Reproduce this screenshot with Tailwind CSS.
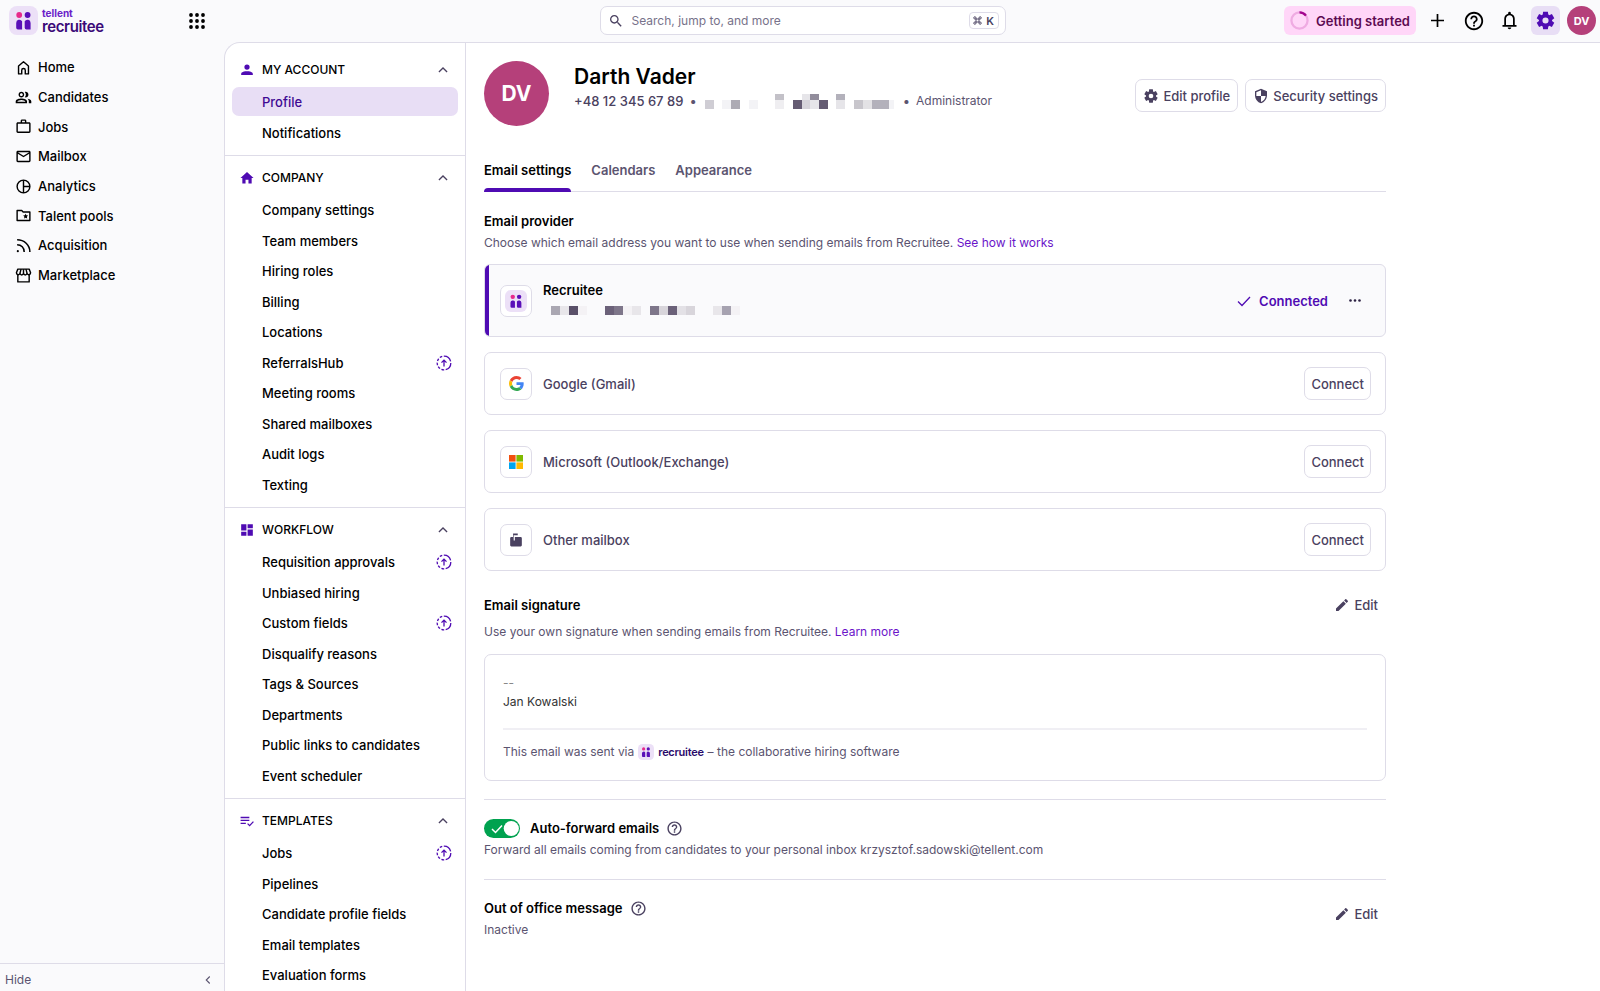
<!DOCTYPE html>
<html lang="en">
<head>
  <meta charset="UTF-8">
  <meta name="viewport" content="width=device-width, initial-scale=1.0">
  <title>Recruitee - Profile settings</title>
  <script src="https://cdn.jsdelivr.net/npm/@tailwindcss/browser@4"></script>
</head>
<body class="bg-[#fafafc] text-black font-['Inter',sans-serif] text-[13px] leading-[20px] h-screen flex flex-col overflow-hidden">

  <!-- Icon sprite -->
  <svg class="hidden" xmlns="http://www.w3.org/2000/svg">
    <symbol id="logo" viewBox="0 0 29 29">
      <rect width="29" height="29" rx="8" fill="#ece0f7"/>
      <circle cx="10.2" cy="9" r="2.9" fill="#e72a8b"/>
      <circle cx="18.6" cy="9" r="2.9" fill="#5a0fb8"/>
      <path d="M7.2 23.5v-6.6a3.2 3.2 0 0 1 5.9-1.7v8.3H9a1.8 1.8 0 0 1-1.8-1.8zM21.6 23.5v-6.6a3.2 3.2 0 0 0-5.9-1.7v6.5a1.8 1.8 0 0 0 1.8 1.8z" fill="#5a0fb8"/>
    </symbol>
    <symbol id="home" viewBox="0 0 24 24"><path d="M5 10l7-6 7 6v11h-4.5v-5a2.5 2.5 0 0 0-5 0v5H5z" fill="none" stroke="currentColor" stroke-width="2" stroke-linejoin="round"/></symbol>
    <symbol id="group" viewBox="0 0 24 24"><path fill="currentColor" d="M9 13.25c-3 0-8 1.2-8 4V20h16v-2.75c0-2.8-5-4-8-4zM3.3 18c.2-1.5 3.3-2.6 5.7-2.6s5.5 1.1 5.7 2.6H3.3zM9 12c2.2 0 4-1.8 4-4s-1.800-4-4-4-4 1.800-4 4 1.800 4 4 4zm0-6c1.100 0 2 .9 2 2s-.9 2-2 2-2-.9-2-2 .9-2 2-2zm8.500 7.800c1.200.9 2 2 2 3.450V20H23v-2.750c0-2-3-3.150-5.500-3.450zM15 12c2.200 0 4-1.800 4-4s-1.800-4-4-4c-.4 0-.9.1-1.200.2a6 6 0 0 1 0 7.600c.4.1.8.2 1.200.2z"/></symbol>
    <symbol id="work" viewBox="0 0 24 24"><path fill="currentColor" d="M14 6V4h-4v2h4zM4 8v11h16V8H4zm16-2c1.110 0 2 .89 2 2v11c0 1.110-.89 2-2 2H4c-1.110 0-2-.89-2-2l.01-11c0-1.110.88-2 1.990-2h4V4c0-1.110.89-2 2-2h4c1.110 0 2 .89 2 2v2h4z"/></symbol>
    <symbol id="mail" viewBox="0 0 24 24"><path fill="currentColor" d="M22 6c0-1.100-.9-2-2-2H4c-1.100 0-2 .9-2 2v12c0 1.100.9 2 2 2h16c1.100 0 2-.9 2-2V6zm-2 0l-8 5-8-5h16zm0 12H4V8l8 5 8-5v10z"/></symbol>
    <symbol id="pie" viewBox="0 0 24 24"><g fill="none" stroke="currentColor" stroke-width="2"><circle cx="12" cy="12" r="9"/><path d="M12 3v18M12 12h9"/></g></symbol>
    <symbol id="folder" viewBox="0 0 24 24"><path d="M3 5h6.500l2 2H21v12H3z" fill="none" stroke="currentColor" stroke-width="2" stroke-linejoin="round"/><path fill="currentColor" d="M15 9.500l1.100 2.300 2.400.3-1.800 1.700.5 2.500-2.200-1.200-2.200 1.200.5-2.500-1.800-1.700 2.400-.3z"/></symbol>
    <symbol id="rss" viewBox="0 0 24 24"><g fill="none" stroke="currentColor" stroke-width="2.200"><path d="M3 4c10 0 18 7 18 17"/><path d="M3 11c6 0 10 4 10 10"/></g><circle cx="4" cy="20" r="1.500" fill="currentColor"/></symbol>
    <symbol id="store" viewBox="0 0 24 24"><g fill="none" stroke="currentColor" stroke-width="2" stroke-linejoin="round"><path d="M4 3h16l2 5c0 3-4 4-5 1-1 3-4 3-5 0-1 3-4 3-5 0-1 3-5 2-5-1z"/><path d="M4 11v10h16V11M8.500 3L7 9M15.500 3L17 9M12 3v6"/></g></symbol>
    <symbol id="search" viewBox="0 0 24 24"><path fill="currentColor" d="M15.500 14h-.79l-.28-.27C15.410 12.590 16 11.110 16 9.500 16 5.910 13.090 3 9.500 3S3 5.910 3 9.500 5.910 16 9.500 16c1.610 0 3.090-.59 4.230-1.570l.27.28v.79l5 4.990L20.490 19l-4.990-5zm-6 0C7.010 14 5 11.990 5 9.500S7.010 5 9.500 5 14 7.010 14 9.500 11.990 14 9.500 14z"/></symbol>
    <symbol id="help" viewBox="0 0 24 24"><path fill="currentColor" d="M11 18h2v-2h-2v2zm1-16C6.480 2 2 6.480 2 12s4.480 10 10 10 10-4.480 10-10S17.520 2 12 2zm0 18c-4.410 0-8-3.590-8-8s3.590-8 8-8 8 3.590 8 8-3.590 8-8 8zm0-14c-2.210 0-4 1.790-4 4h2c0-1.100.9-2 2-2s2 .9 2 2c0 2-3 1.750-3 5h2c0-2.250 3-2.500 3-5 0-2.210-1.790-4-4-4z"/></symbol>
    <symbol id="bell" viewBox="0 0 24 24"><path fill="currentColor" d="M4 19v-2h2v-7c0-2.800 1.700-5.200 4.500-5.800V3.500a1.500 1.500 0 0 1 3 0v.7C16.300 4.800 18 7.200 18 10v7h2v2H4zm4-2h8v-7c0-2.200-1.800-4-4-4s-4 1.800-4 4v7zm4 5c-1.100 0-2-.9-2-2h4c0 1.100-.9 2-2 2z"/></symbol>
    <symbol id="gear" viewBox="0 0 24 24"><path fill="currentColor" fill-rule="evenodd" d="M9.250 22l-.4-3.200q-.33-.12-.61-.3-.29-.17-.56-.37L4.700 19.370l-2.750-4.750 2.570-1.950q-.02-.17-.02-.34v-.68q0-.16.02-.33L1.950 9.370 4.700 4.620l2.980 1.250q.27-.2.57-.37.3-.18.6-.3L9.250 2h5.500l.4 3.200q.32.12.61.3.29.17.56.37l2.980-1.250 2.750 4.750-2.570 1.950q.02.17.02.33v.68q0 .17-.05.34l2.580 1.950-2.750 4.750-2.960-1.240q-.27.2-.57.37-.3.18-.6.3l-.4 3.200zM12 15.500a3.500 3.500 0 1 0 0-7 3.500 3.500 0 0 0 0 7z"/></symbol>
    <symbol id="shield" viewBox="0 0 24 24"><path fill="currentColor" d="M12 1L3 5v6c0 5.550 3.840 10.740 9 12 5.160-1.260 9-6.450 9-12V5l-9-4zm0 10.990h7c-.53 4.120-3.280 7.790-7 8.940V12H5V6.300l7-3.110v8.800z"/></symbol>
    <symbol id="pencil" viewBox="0 0 24 24"><path fill="currentColor" d="M3 17.250V21h3.750L17.810 9.940l-3.750-3.750L3 17.250zM20.710 7.040c.39-.39.39-1.020 0-1.410l-2.340-2.340c-.39-.39-1.020-.39-1.410 0l-1.830 1.830 3.750 3.750 1.830-1.830z"/></symbol>
    <symbol id="person" viewBox="0 0 24 24"><path fill="currentColor" d="M12 11.500a4.500 4.500 0 1 0 0-9 4.500 4.500 0 0 0 0 9zM2 20.500v-2c0-3.500 6-4.500 10-4.500s10 1 10 4.500v2z"/></symbol>
    <symbol id="house" viewBox="0 0 24 24"><path fill="currentColor" d="M12 1.500L.8 12H4v9.500h5.500V15h5v6.500H20V12h3.200z"/></symbol>
    <symbol id="board" viewBox="0 0 24 24"><path fill="currentColor" d="M2 2h9v11H2zM2 15h9v7H2zM13 2h9v7h-9zM13 11h9v11h-9z"/></symbol>
    <symbol id="checklist" viewBox="0 0 24 24"><path d="M1 6h15M1 11h15M1 16h9M13 16.500l3.500 3.500L23 13" fill="none" stroke="currentColor" stroke-width="2.200"/></symbol>
    <symbol id="up" viewBox="0 0 24 24"><path d="M5 15.500l7-7 7 7" fill="none" stroke="currentColor" stroke-width="2.200"/></symbol>
    <symbol id="upgrade" viewBox="0 0 16 16"><g fill="none" stroke="currentColor" stroke-width="1.300"><path d="M8 1.200a6.800 6.800 0 0 1 0 13.600" stroke-dasharray="9 1.500"/><path d="M8 14.800A6.800 6.800 0 0 1 8 1.200" stroke-dasharray="2.600 1.600"/><path d="M8 11.500v-6M5.500 7.600L8 5.100l2.500 2.500"/></g></symbol>
    <symbol id="mailbox" viewBox="0 0 24 24"><path fill="currentColor" d="M20 7H10v6H8V4h7V1H7v6H4a2 2 0 0 0-2 2v12a2 2 0 0 0 2 2h16a2 2 0 0 0 2-2V9a2 2 0 0 0-2-2z"/></symbol>
  </svg>

  <!-- Top bar -->
  <header class="h-[42px] shrink-0 flex items-start justify-between pt-[6px] px-1">
    <div class="flex flex-1 items-center pl-[5px]">
      <a href="#" class="flex items-center gap-1">
        <svg class="size-[29px]"><use href="#logo"/></svg>
        <span class="flex flex-col w-[62px] text-[#3a0a78] font-semibold">
          <span class="text-[10px] leading-[12px] font-bold text-[#6a1fc9]">tellent</span>
          <span class="text-[15px] leading-[15px] tracking-tight">recruitee</span>
        </span>
      </a>
      <button class="ml-[85px]" aria-label="Apps">
        <svg class="size-4" viewBox="0 0 16 16"><path d="M2 2h0M8 2h0M14 2h0M2 8h0M8 8h0M14 8h0M2 14h0M8 14h0M14 14h0" stroke="currentColor" stroke-width="3.800" stroke-linecap="round"/></svg>
      </button>
    </div>

    <label class="flex h-[29px] w-[406px] items-center rounded-[7px] border border-[#dedce8] bg-white pl-[7px] pr-[6px]">
      <svg class="size-4 text-[#4a4160]"><use href="#search"/></svg>
      <input type="search" aria-label="Search" placeholder="Search, jump to, and more" class="ml-2 min-w-0 flex-1 text-xs outline-none placeholder:text-[#77728a]">
      <kbd class="flex h-[17px] w-[30px] items-center justify-center gap-1 rounded border border-[#dedce8] font-['Inter',sans-serif] text-[11px] font-semibold text-[#4a4160]">
        <svg class="size-[9px]" viewBox="0 0 24 24" fill="none" stroke="currentColor" stroke-width="2.500"><path d="M8 8h8v8H8zM8 8H5a3 3 0 1 1 3-3zM16 8V5a3 3 0 1 1 3 3zM16 16h3a3 3 0 1 1-3 3zM8 16v3a3 3 0 1 1-3-3z"/></svg>
        K
      </kbd>
    </label>

    <div class="flex flex-1 items-center justify-end gap-[7px]">
      <button class="flex h-[29px] items-center gap-[7px] rounded-md bg-[#ffd6f8] px-[6px] font-semibold text-[#5c0b52] whitespace-nowrap">
        <svg class="size-[19px]" viewBox="0 0 20 20" fill="none" stroke-width="2.400"><circle cx="10" cy="10" r="8.500" stroke="#efabe2"/><path d="M10 1.500a8.500 8.500 0 0 1 6.800 3.400" stroke="#a3058e"/></svg>
        Getting started
      </button>
      <button class="flex size-[29px] items-center justify-center" aria-label="Add">
        <svg class="size-[13px]" viewBox="0 0 13 13"><path d="M6.500 0v13M0 6.500h13" stroke="currentColor" stroke-width="1.700"/></svg>
      </button>
      <button class="flex size-[29px] items-center justify-center" aria-label="Help"><svg class="size-[22px]"><use href="#help"/></svg></button>
      <button class="flex size-[29px] items-center justify-center" aria-label="Notifications"><svg class="size-[21px]"><use href="#bell"/></svg></button>
      <button class="flex size-[29px] items-center justify-center rounded-md bg-[#e8def5] text-[#4f0bb3]" aria-label="Settings"><svg class="size-[21px]"><use href="#gear"/></svg></button>
      <button class="flex size-[29px] items-center justify-center rounded-full bg-[#b5407a] text-[11px] font-bold text-white">DV</button>
    </div>
  </header>

  <div class="flex min-h-0 flex-1">
    <!-- Main navigation -->
    <aside class="flex w-[224px] shrink-0 flex-col justify-between">
      <nav class="flex flex-col pt-[10px] font-medium [&_a]:flex [&_a]:h-[30px] [&_a:nth-child(3n)]:h-[29px] [&_a]:items-center [&_a]:gap-[6px] [&_a]:pl-[15px] [&_svg]:size-[17px]">
        <a href="#"><svg><use href="#home"/></svg>Home</a>
        <a href="#"><svg><use href="#group"/></svg>Candidates</a>
        <a href="#"><svg><use href="#work"/></svg>Jobs</a>
        <a href="#"><svg><use href="#mail"/></svg>Mailbox</a>
        <a href="#"><svg><use href="#pie"/></svg>Analytics</a>
        <a href="#"><svg><use href="#folder"/></svg>Talent pools</a>
        <a href="#"><svg><use href="#rss"/></svg>Acquisition</a>
        <a href="#"><svg><use href="#store"/></svg>Marketplace</a>
      </nav>
      <button class="flex h-7 items-center justify-between border-t border-[#dedce8] pt-1 pl-[5px] pr-[10px] text-xs text-[#5b5470]">
        Hide
        <svg class="size-3 -rotate-90"><use href="#up"/></svg>
      </button>
    </aside>

    <div class="flex min-w-0 flex-1 overflow-hidden rounded-tl-2xl border-t border-l border-[#dedce8] bg-white">
      <!-- Settings menu -->
      <nav id="settingsMenu" class="w-[241px] shrink-0 overflow-hidden border-r border-[#dedce8] pt-[5px] font-medium"></nav>

      <main class="min-w-0 flex-1 overflow-hidden px-[18px] pt-[18px]">
        <div class="max-w-[902px]">
          <div class="flex items-start">
            <div class="flex size-[65px] shrink-0 items-center justify-center rounded-full bg-[#b5407a] text-[21px] font-bold text-white">DV</div>
            <div class="ml-[25px] flex-1">
              <h1 class="pt-[2px] text-[21px] leading-7 font-semibold">Darth Vader</h1>
              <p class="flex items-center text-[#5b5470]">
                <span class="font-medium text-[#4a4160]">+48 12 345 67 89</span>
                <span class="mx-[6px]">•</span>
                <svg class="mt-[2px] mr-[6px] ml-[2px] h-4 w-[192px]" viewBox="0 0 192 16" shape-rendering="crispEdges">
                  <path fill="#cfcdd4" d="M0 6h9v9H0z"/><path fill="#f3f3f6" d="M17 6h9v9h-9zM44 6h9v9h-9zM184 6h5v9h-5z"/><path fill="#adabb4" d="M26 6h9v9h-9z"/>
                  <path fill="#c3c1c8" d="M70 0h9v6h-9z"/><path fill="#efeef1" d="M70 6h9v9h-9z"/>
                  <path fill="#655c73" d="M88 6h9v9h-9zM114 6h9v9h-9z"/><path fill="#d6d4da" d="M97 6h8v9h-8z"/><path fill="#e6e5e9" d="M97 0h8v6h-8zM105 6h9v9h-9zM131 6h9v9h-9z"/>
                  <path fill="#928d9c" d="M105 0h9v6h-9z"/><path fill="#b3b1bb" d="M131 0h9v6h-9zM167 6h17v9h-17z"/><path fill="#c8c6cc" d="M149 6h9v9h-9z"/><path fill="#e3e2e5" d="M158 6h9v9h-9z"/>
                </svg>
                <span class="mr-[6px]">•</span>
                <span class="text-xs leading-5">Administrator</span>
              </p>
            </div>
            <div class="flex gap-[7px] pt-[18px] font-medium text-[#4a4160]">
              <button class="flex h-[33px] items-center gap-1 rounded-[7px] border border-[#dedce8] px-[7px]"><svg class="size-4"><use href="#gear"/></svg>Edit profile</button>
              <button class="flex h-[33px] items-center gap-1 rounded-[7px] border border-[#dedce8] px-[7px]"><svg class="size-4"><use href="#shield"/></svg>Security settings</button>
            </div>
          </div>

          <!-- Tabs -->
          <div class="mt-[34px] flex h-8 gap-5 border-b border-[#dedce8] font-semibold text-[#5b5470]">
            <button class="-mb-px flex flex-col justify-between text-black">Email settings<span class="h-1 w-full rounded-t bg-[#4f0bb3]"></span></button>
            <button class="self-start">Calendars</button>
            <button class="self-start">Appearance</button>
          </div>

          <!-- Email provider -->
          <section class="mt-[19px]">
            <h2 class="font-semibold">Email provider</h2>
            <p class="mt-[2px] text-xs leading-5 text-[#5b5470]">Choose which email address you want to use when sending emails from Recruitee. <a href="#" class="text-[#6a14c9]">See how it works</a></p>

            <div class="mt-[11px] flex flex-col gap-[15px] font-medium text-[#4a4160]">
              <div class="flex h-[73px] items-center overflow-hidden rounded-md border border-[#dedce8] bg-[#fafafc] pr-[18px]">
                <span class="h-full w-1 bg-[#4f0bb3]"></span>
                <span class="ml-[11px] flex size-8 items-center justify-center rounded-[7px] border border-[#dedce8] bg-white"><svg class="size-[22px]"><use href="#logo"/></svg></span>
                <div class="ml-[11px] flex-1">
                  <h3 class="font-semibold text-black">Recruitee</h3>
                  <svg class="my-[6px] h-[10px] w-[200px]" viewBox="0 0 200 10" shape-rendering="crispEdges">
                    <path fill="#aaa7b2" d="M8 0h9v9H8z"/><path fill="#e8e6ea" d="M17 0h9v9h-9zM89 0h9v9h-9zM170 0h9v9h-9z"/><path fill="#5a5069" d="M26 0h9v9h-9z"/><path fill="#f4f2f5" d="M35 0h9v9h-9zM80 0h9v9h-9zM188 0h9v9h-9z"/>
                    <path fill="#6b6179" d="M62 0h9v9h-9zM125 0h9v9h-9z"/><path fill="#7e768a" d="M71 0h9v9h-9zM107 0h9v9h-9z"/><path fill="#d8d5db" d="M116 0h9v9h-9zM143 0h9v9h-9z"/><path fill="#e3e1e6" d="M134 0h9v9h-9z"/><path fill="#a6a2b0" d="M179 0h9v9h-9z"/>
                  </svg>
                </div>
                <span class="flex items-center gap-2 font-semibold text-[#4f0bb3]">
                  <svg class="size-[14px]" viewBox="0 0 14 14"><path d="M1 7.500l4 4 8-8.500" fill="none" stroke="currentColor" stroke-width="1.300"/></svg>
                  Connected
                </span>
                <button class="ml-[15px] flex size-6 items-center justify-center text-[#2c2142]" aria-label="More">
                  <svg class="h-[3px] w-3" viewBox="0 0 12 3" fill="currentColor"><circle cx="1.500" cy="1.500" r="1.300"/><circle cx="6" cy="1.500" r="1.300"/><circle cx="10.500" cy="1.500" r="1.300"/></svg>
                </button>
              </div>

              <div class="flex h-[63px] items-center rounded-[7px] border border-[#dedce8] pr-[14px] pl-[15px]">
                <span class="flex size-8 items-center justify-center rounded-[7px] border border-[#dedce8]">
                  <svg class="size-[15px]" viewBox="0 0 48 48"><path fill="#ea4335" d="M24 9.500c3.540 0 6.710 1.220 9.210 3.600l6.850-6.850C35.900 2.380 30.470 0 24 0 14.620 0 6.510 5.380 2.560 13.220l7.980 6.190C12.430 13.720 17.740 9.500 24 9.500z"/><path fill="#4285f4" d="M46.980 24.550c0-1.570-.15-3.090-.38-4.550H24v9.020h12.940c-.58 2.960-2.260 5.480-4.780 7.180l7.730 6c4.510-4.180 7.090-10.360 7.090-17.650z"/><path fill="#fbbc05" d="M10.530 28.590c-.48-1.450-.76-2.990-.76-4.590s.27-3.140.76-4.590l-7.980-6.190C.92 16.460 0 20.120 0 24c0 3.880.92 7.540 2.560 10.780l7.970-6.190z"/><path fill="#34a853" d="M24 48c6.480 0 11.930-2.130 15.890-5.810l-7.730-6c-2.150 1.450-4.920 2.300-8.160 2.300-6.260 0-11.570-4.220-13.470-9.910l-7.980 6.190C6.510 42.620 14.620 48 24 48z"/></svg>
                </span>
                <h3 class="ml-[11px] flex-1">Google (Gmail)</h3>
                <button class="h-[33px] rounded-[7px] border border-[#dedce8] px-[6px] font-medium">Connect</button>
              </div>

              <div class="flex h-[63px] items-center rounded-[7px] border border-[#dedce8] pr-[14px] pl-[15px]">
                <span class="flex size-8 items-center justify-center rounded-[7px] border border-[#dedce8]">
                  <svg class="size-[14px]" viewBox="0 0 14 14"><path fill="#f2500f" d="M0 0h6.600v6.600H0z"/><path fill="#7fba00" d="M7.400 0H14v6.600H7.400z"/><path fill="#00a4ef" d="M0 7.400h6.600V14H0z"/><path fill="#ffb900" d="M7.400 7.400H14V14H7.400z"/></svg>
                </span>
                <h3 class="ml-[11px] flex-1">Microsoft (Outlook/Exchange)</h3>
                <button class="h-[33px] rounded-[7px] border border-[#dedce8] px-[6px] font-medium">Connect</button>
              </div>

              <div class="flex h-[63px] items-center rounded-[7px] border border-[#dedce8] pr-[14px] pl-[15px]">
                <span class="flex size-8 items-center justify-center rounded-[7px] border border-[#dedce8]"><svg class="size-[14px]"><use href="#mailbox"/></svg></span>
                <h3 class="ml-[11px] flex-1">Other mailbox</h3>
                <button class="h-[33px] rounded-[7px] border border-[#dedce8] px-[6px] font-medium">Connect</button>
              </div>
            </div>
          </section>

          <!-- Email signature -->
          <section class="mt-6">
            <div class="flex items-center justify-between pr-2">
              <h2 class="font-semibold">Email signature</h2>
              <button class="flex items-center gap-1 font-medium text-[#4a4160]"><svg class="size-4"><use href="#pencil"/></svg>Edit</button>
            </div>
            <p class="mt-[7px] text-xs leading-5 text-[#5b5470]">Use your own signature when sending emails from Recruitee. <a href="#" class="text-[#6a14c9]">Learn more</a></p>
            <div class="mt-3 rounded-[7px] border border-[#dedce8] p-[18px] text-xs">
              <p class="leading-[19px] text-[#888]">--</p>
              <p class="leading-[19px] text-[#333]">Jan Kowalski</p>
              <p class="mt-[17px] flex items-center gap-1 border-t-2 border-[#f0eff4] pt-3 leading-5 text-[#5b5470]">
                This email was sent via
                <svg class="size-4"><use href="#logo"/></svg>
                <span class="text-[11px] font-semibold tracking-tight text-[#2a0a6b]">recruitee</span>
                – the collaborative hiring software
              </p>
            </div>
          </section>

          <section class="mt-[18px] border-t border-[#dedce8] pt-[18px]">
            <div class="flex items-center">
              <span class="relative h-[19px] w-9">
                <input id="forward" type="checkbox" checked class="peer block h-[19px] w-9 appearance-none rounded-full bg-[#b9b5c6] checked:bg-[#00a24f]">
                <svg class="pointer-events-none absolute inset-0 h-[19px] w-9" viewBox="0 0 36 19"><path d="M8 10l3.500 3.500L18 6.500" fill="none" stroke="#fff" stroke-width="1.500"/><circle cx="27.300" cy="9.500" r="7.600" fill="#fff"/></svg>
              </span>
              <label for="forward" class="ml-[10px] font-semibold">Auto-forward emails</label>
              <svg class="ml-[7px] size-[17px] text-[#4a4160]"><use href="#help"/></svg>
            </div>
            <p class="mt-[2px] text-xs leading-5 text-[#5b5470]">Forward all emails coming from candidates to your personal inbox krzysztof.sadowski@tellent.com</p>
          </section>

          <section class="mt-[19px] flex items-center justify-between border-t border-[#dedce8] pt-[18px] pr-2">
            <div>
              <h2 class="flex items-center gap-[7px] font-semibold">Out of office message <svg class="size-[17px] text-[#4a4160]"><use href="#help"/></svg></h2>
              <p class="mt-[2px] text-xs leading-5 text-[#5b5470]">Inactive</p>
            </div>
            <button class="mb-[10px] flex items-center gap-1 font-medium text-[#4a4160]"><svg class="size-4"><use href="#pencil"/></svg>Edit</button>
          </section>
        </div>
      </main>
    </div>
  </div>

  <script>
    // entries ending in * need an upgrade
    const sections = [
      { icon: 'person', title: 'MY ACCOUNT', items: ['Profile', 'Notifications'] },
      { icon: 'house', title: 'COMPANY', items: ['Company settings', 'Team members', 'Hiring roles', 'Billing', 'Locations', 'ReferralsHub*', 'Meeting rooms', 'Shared mailboxes', 'Audit logs', 'Texting'] },
      { icon: 'board', title: 'WORKFLOW', items: ['Requisition approvals*', 'Unbiased hiring', 'Custom fields*', 'Disqualify reasons', 'Tags & Sources', 'Departments', 'Public links to candidates', 'Event scheduler'] },
      { icon: 'checklist', title: 'TEMPLATES', items: ['Jobs*', 'Pipelines', 'Candidate profile fields', 'Email templates', 'Evaluation forms'] }
    ];

    document.getElementById('settingsMenu').innerHTML = sections.map(s => `
      <section class="border-b border-[#dedce8] px-[7px] pt-3 pb-[7px]">
        <button class="flex h-5 w-full items-center pr-2 pl-2 text-xs">
          <svg class="size-[14px] text-[#4f0bb3]"><use href="#${s.icon}"/></svg>
          <span class="ml-2 flex-1 text-left">${s.title}</span>
          <svg class="size-[14px] text-[#4a4160]"><use href="#up"/></svg>
        </button>
        <ul class="mt-[7px]">
          ${s.items.map(item => `
          <li class="h-[31px] even:h-[30px]">
            <a href="#" class="flex h-[29px] items-center justify-between rounded-[7px] pr-[6px] pl-[30px] ${item === 'Profile' ? 'bg-[#e8def5] text-[#3f0a93]' : ''}">
              ${item.replace('*', '').replace('&', '&amp;')}
              ${item.endsWith('*') ? '<svg class="size-4 text-[#4f0bb3]"><use href="#upgrade"/></svg>' : ''}
            </a>
          </li>`).join('')}
        </ul>
      </section>`).join('');
  </script>
</body>
</html>
